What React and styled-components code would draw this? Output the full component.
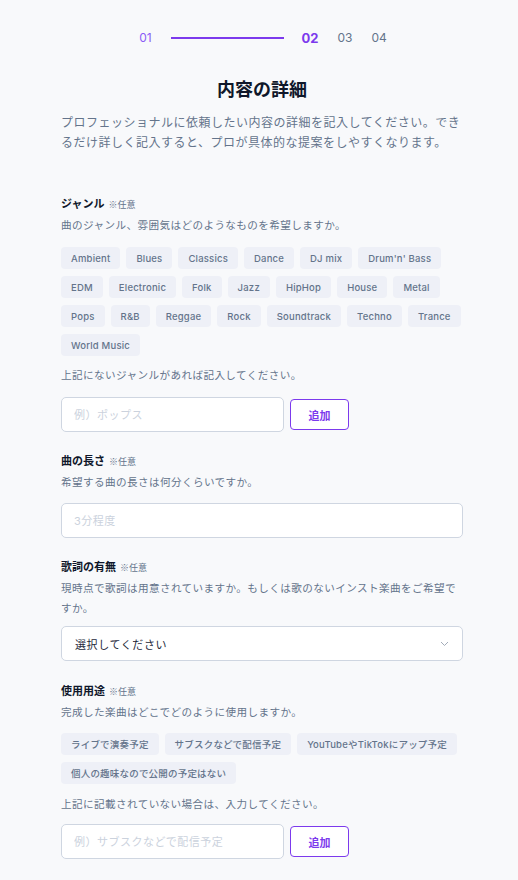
import React from "react";
import styled, { createGlobalStyle } from "styled-components";

const GlobalStyle = createGlobalStyle`
	* { box-sizing: border-box; }
	body {
		margin: 0;
		background: #f8f9fb;
		font-family: "Inter", "Noto Sans CJK JP", sans-serif;
		color: #1e293b;
	}
`;

const Page = styled.main`
	width: 402px;
	margin-left: 61px;
	padding: 30px 0 20px;
`;

const Stepper = styled.nav`
	display: flex;
	align-items: center;
	justify-content: center;
	gap: 19px;
	height: 16px;
	padding-left: 2px;
	line-height: 16px;
`;

const Step = styled.span`
	color: ${(p) => (p.$active ? "#7c3aed" : p.$done ? "#8b5cf6" : "#64748b")};
	font-weight: ${(p) => (p.$active ? 700 : 400)};
	font-size: ${(p) => (p.$active ? "13px" : "12px")};
`;

const StepLine = styled.span`
	display: block;
	width: 113px;
	height: 2px;
	background: #7c3aed;
	margin-right: -1px;
`;

const Title = styled.h1`
	margin: 32px 0 0;
	text-align: center;
	font-size: 18px;
	line-height: 24px;
	font-weight: 700;
	color: #0f172a;
`;

const Lead = styled.p`
	margin: 11px 0 0;
	font-size: 12px;
	line-height: 20px;
	color: #64748b;
	letter-spacing: 0.5px;
`;

const Section = styled.section`
	margin-top: ${(p) => p.$top || 21}px;
`;

const Label = styled.h2`
	margin: 0;
	font-size: 11px;
	line-height: 16px;
	font-weight: 700;
	color: #0f172a;
`;

const Optional = styled.span`
	margin-left: 4px;
	font-family: "Noto Sans CJK JP", sans-serif;
	font-size: 9px;
	font-weight: 400;
	color: #64748b;
`;

const Hint = styled.p`
	margin: ${(p) => p.$m || "3px 0 0"};
	font-size: 10.6px;
	line-height: 20px;
	color: #64748b;
	letter-spacing: 0.4px;
`;

const Chips = styled.div`
	display: flex;
	flex-wrap: wrap;
	gap: 7px 6px;
	margin-top: ${(p) => p.$top || 11}px;
`;

const Chip = styled.button`
	height: 22px;
	padding: 0 10px;
	border: none;
	border-radius: 4px;
	background: #eef0f7;
	color: #64748b;
	font-family: inherit;
	font-size: 9.5px;
	font-weight: 500;
	letter-spacing: 0.2px;
	cursor: pointer;
`;

const InputRow = styled.div`
	display: flex;
	align-items: center;
	gap: 6px;
	margin-top: ${(p) => p.$top || 11}px;
`;

const TextInput = styled.input`
	width: ${(p) => p.$w || "100%"};
	height: 35px;
	padding: 0 12px;
	border: 1px solid #cfd6e1;
	border-radius: 5px;
	background: #fff;
	font-family: inherit;
	font-size: 11px;
	letter-spacing: 0.5px;
	color: #1e293b;
	outline: none;
	&::placeholder { color: #cbd2dd; }
`;

const AddButton = styled.button`
	width: 59px;
	height: 31px;
	border: 1.5px solid #7c3aed;
	border-radius: 4px;
	background: #fff;
	color: #7c3aed;
	font-family: inherit;
	font-size: 11px;
	font-weight: 700;
	cursor: pointer;
`;

const Select = styled.div`
	display: flex;
	align-items: center;
	justify-content: space-between;
	height: 35px;
	margin-top: 7px;
	padding: 0 13px 0 13px;
	border: 1px solid #cfd6e1;
	border-radius: 5px;
	background: #fff;
	font-size: 11px;
	letter-spacing: 0.6px;
	color: #1e293b;
`;

const genres = [
	"Ambient", "Blues", "Classics", "Dance", "DJ mix", "Drum'n' Bass",
	"EDM", "Electronic", "Folk", "Jazz", "HipHop", "House", "Metal",
	"Pops", "R&B", "Reggae", "Rock", "Soundtrack", "Techno", "Trance",
	"World Music",
];

const uses = [
	"ライブで演奏予定",
	"サブスクなどで配信予定",
	"YouTubeやTikTokにアップ予定",
	"個人の趣味なので公開の予定はない",
];

const Chevron = () => (
	<svg width="9" height="6" viewBox="0 0 9 6" fill="none">
		<path d="M1 1l3.5 3.5L8 1" stroke="#a3acb9" strokeWidth="1" />
	</svg>
);

const App = () => (
	<>
		<GlobalStyle />
		<Page>
			<Stepper>
				<Step $done>01</Step>
				<StepLine />
				<Step $active>02</Step>
				<Step>03</Step>
				<Step>04</Step>
			</Stepper>

			<Title>内容の詳細</Title>
			<Lead>
				プロフェッショナルに依頼したい内容の詳細を記入してください。できるだけ詳しく記入すると、プロが具体的な提案をしやすくなります。
			</Lead>

			<Section $top={43}>
				<Label>ジャンル<Optional>※任意</Optional></Label>
				<Hint>曲のジャンル、雰囲気はどのようなものを希望しますか。</Hint>
				<Chips>
					{genres.map((g) => <Chip key={g}>{g}</Chip>)}
				</Chips>
				<Hint $m="10px 0 0">上記にないジャンルがあれば記入してください。</Hint>
				<InputRow>
					<TextInput $w="223px" placeholder="例）ポップス" />
					<AddButton>追加</AddButton>
				</InputRow>
			</Section>

			<Section>
				<Label>曲の長さ<Optional>※任意</Optional></Label>
				<Hint>希望する曲の長さは何分くらいですか。</Hint>
				<InputRow $top={10}>
					<TextInput placeholder="3分程度" />
				</InputRow>
			</Section>

			<Section>
				<Label>歌詞の有無<Optional>※任意</Optional></Label>
				<Hint>現時点で歌詞は用意されていますか。もしくは歌のないインスト楽曲をご希望ですか。</Hint>
				<Select>
					選択してください
					<Chevron />
				</Select>
			</Section>

			<Section $top={22}>
				<Label>使用用途<Optional>※任意</Optional></Label>
				<Hint>完成した楽曲はどこでどのように使用しますか。</Hint>
				<Chips $top={10}>
					{uses.map((u) => <Chip key={u}>{u}</Chip>)}
				</Chips>
				<Hint $m="11px 0 0">上記に記載されていない場合は、入力してください。</Hint>
				<InputRow $top={9}>
					<TextInput $w="223px" placeholder="例）サブスクなどで配信予定" />
					<AddButton>追加</AddButton>
				</InputRow>
			</Section>
		</Page>
	</>
);

export default App;
